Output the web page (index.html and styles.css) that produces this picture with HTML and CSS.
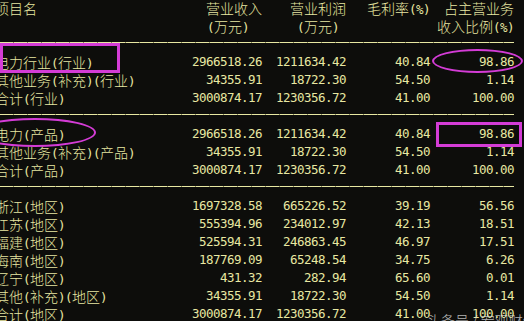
FILE: index.html
```html
<!DOCTYPE html>
<html lang="zh-CN">
<head>
<meta charset="utf-8">
<title>主营构成</title>
<link rel="stylesheet" href="styles.css">
</head>
<body>
<div class="screen">
  <div class="table">
    <div class="row">
      <div class="name">项目名</div>
      <div class="cell">营业收入</div>
      <div class="cell">营业利润</div>
      <div class="cell">毛利率<span class="h">(%)</span></div>
      <div class="cell">占主营业务</div>
    </div>
    <div class="row">
      <div class="name"></div>
      <div class="cell u1"><span class="h">(</span>万元<span class="h">)</span></div>
      <div class="cell u2"><span class="h">(</span>万元<span class="h">)</span></div>
      <div class="cell"></div>
      <div class="cell">收入比例<span class="h">(%)</span></div>
    </div>
    <div class="rule"></div>

    <div class="row">
      <div class="name">电力行业<span class="h">(</span>行业<span class="h">)</span></div>
      <div class="cell num">2966518.26</div>
      <div class="cell num">1211634.42</div>
      <div class="cell num">40.84</div>
      <div class="cell num">98.86</div>
    </div>
    <div class="row">
      <div class="name">其他业务<span class="h">(</span>补充<span class="h">)(</span>行业<span class="h">)</span></div>
      <div class="cell num">34355.91</div>
      <div class="cell num">18722.30</div>
      <div class="cell num">54.50</div>
      <div class="cell num">1.14</div>
    </div>
    <div class="row">
      <div class="name">合计<span class="h">(</span>行业<span class="h">)</span></div>
      <div class="cell num">3000874.17</div>
      <div class="cell num">1230356.72</div>
      <div class="cell num">41.00</div>
      <div class="cell num">100.00</div>
    </div>
    <div class="rule"></div>

    <div class="row">
      <div class="name">电力<span class="h">(</span>产品<span class="h">)</span></div>
      <div class="cell num">2966518.26</div>
      <div class="cell num">1211634.42</div>
      <div class="cell num">40.84</div>
      <div class="cell num">98.86</div>
    </div>
    <div class="row">
      <div class="name">其他业务<span class="h">(</span>补充<span class="h">)(</span>产品<span class="h">)</span></div>
      <div class="cell num">34355.91</div>
      <div class="cell num">18722.30</div>
      <div class="cell num">54.50</div>
      <div class="cell num">1.14</div>
    </div>
    <div class="row">
      <div class="name">合计<span class="h">(</span>产品<span class="h">)</span></div>
      <div class="cell num">3000874.17</div>
      <div class="cell num">1230356.72</div>
      <div class="cell num">41.00</div>
      <div class="cell num">100.00</div>
    </div>
    <div class="rule"></div>

    <div class="row">
      <div class="name">浙江<span class="h">(</span>地区<span class="h">)</span></div>
      <div class="cell num">1697328.58</div>
      <div class="cell num">665226.52</div>
      <div class="cell num">39.19</div>
      <div class="cell num">56.56</div>
    </div>
    <div class="row">
      <div class="name">江苏<span class="h">(</span>地区<span class="h">)</span></div>
      <div class="cell num">555394.96</div>
      <div class="cell num">234012.97</div>
      <div class="cell num">42.13</div>
      <div class="cell num">18.51</div>
    </div>
    <div class="row">
      <div class="name">福建<span class="h">(</span>地区<span class="h">)</span></div>
      <div class="cell num">525594.31</div>
      <div class="cell num">246863.45</div>
      <div class="cell num">46.97</div>
      <div class="cell num">17.51</div>
    </div>
    <div class="row">
      <div class="name">海南<span class="h">(</span>地区<span class="h">)</span></div>
      <div class="cell num">187769.09</div>
      <div class="cell num">65248.54</div>
      <div class="cell num">34.75</div>
      <div class="cell num">6.26</div>
    </div>
    <div class="row">
      <div class="name">辽宁<span class="h">(</span>地区<span class="h">)</span></div>
      <div class="cell num">431.32</div>
      <div class="cell num">282.94</div>
      <div class="cell num">65.60</div>
      <div class="cell num">0.01</div>
    </div>
    <div class="row">
      <div class="name">其他<span class="h">(</span>补充<span class="h">)(</span>地区<span class="h">)</span></div>
      <div class="cell num">34355.91</div>
      <div class="cell num">18722.30</div>
      <div class="cell num">54.50</div>
      <div class="cell num">1.14</div>
    </div>
    <div class="row">
      <div class="name">合计<span class="h">(</span>地区<span class="h">)</span></div>
      <div class="cell num">3000874.17</div>
      <div class="cell num">1230356.72</div>
      <div class="cell num">41.00</div>
      <div class="cell num">100.00</div>
    </div>
  </div>

  <div class="mark rect-a"></div>
  <div class="mark oval-a"></div>
  <div class="mark oval-b"></div>
  <div class="mark rect-b"></div>
  <div class="watermark">头条号 / 宏观财经</div>
</div>
</body>
</html>
```

FILE: styles.css
```css
html, body {
  margin: 0;
  padding: 0;
  background: #0d0d0b;
}

.screen {
  position: relative;
  width: 524px;
  height: 321px;
  overflow: hidden;
  background: #0d0d0b;
  color: #e8e8a2;
  font-family: "Noto Sans CJK SC", "Noto Sans CJK JP", sans-serif;
  font-size: 14px;
  font-weight: 300;
}

.table {
  margin: -1.5px 0 0 -5px;
}

.row {
  display: grid;
  grid-template-columns: 183px repeat(4, 84px);
  height: 18px;
  line-height: 18px;
  white-space: nowrap;
}

.name {
  text-align: left;
}

.cell {
  text-align: right;
}

.h,
.num {
  font-family: "DejaVu Sans Mono", "Liberation Mono", monospace;
  font-size: 12.5px;
  font-weight: 400;
  letter-spacing: -0.52px;
}

.u1 {
  padding-right: 13px;
}

.u2 {
  padding-right: 7px;
}

.rule {
  height: 1px;
  width: 514px;
  margin: 7px 0 10px 5px;
  background: repeating-linear-gradient(90deg, #e8e8a2 0 13px, #8a8a5a 13px 14px);
}

.mark {
  position: absolute;
  box-sizing: border-box;
  border: 3px solid #d43cd6;
}

.rect-a {
  left: 0;
  top: 43px;
  width: 120px;
  height: 30px;
}

.oval-a {
  left: 432px;
  top: 49px;
  width: 91px;
  height: 24px;
  border-width: 2.5px;
  border-radius: 50%;
}

.oval-b {
  left: -26px;
  top: 118px;
  width: 122px;
  height: 29px;
  border-width: 2.5px;
  border-radius: 50%;
}

.rect-b {
  left: 436px;
  top: 122px;
  width: 86px;
  height: 25px;
}

.watermark {
  position: absolute;
  left: 427px;
  top: 311px;
  font-size: 14px;
  line-height: 18px;
  color: rgba(225, 225, 225, 0.8);
  white-space: nowrap;
}
```
